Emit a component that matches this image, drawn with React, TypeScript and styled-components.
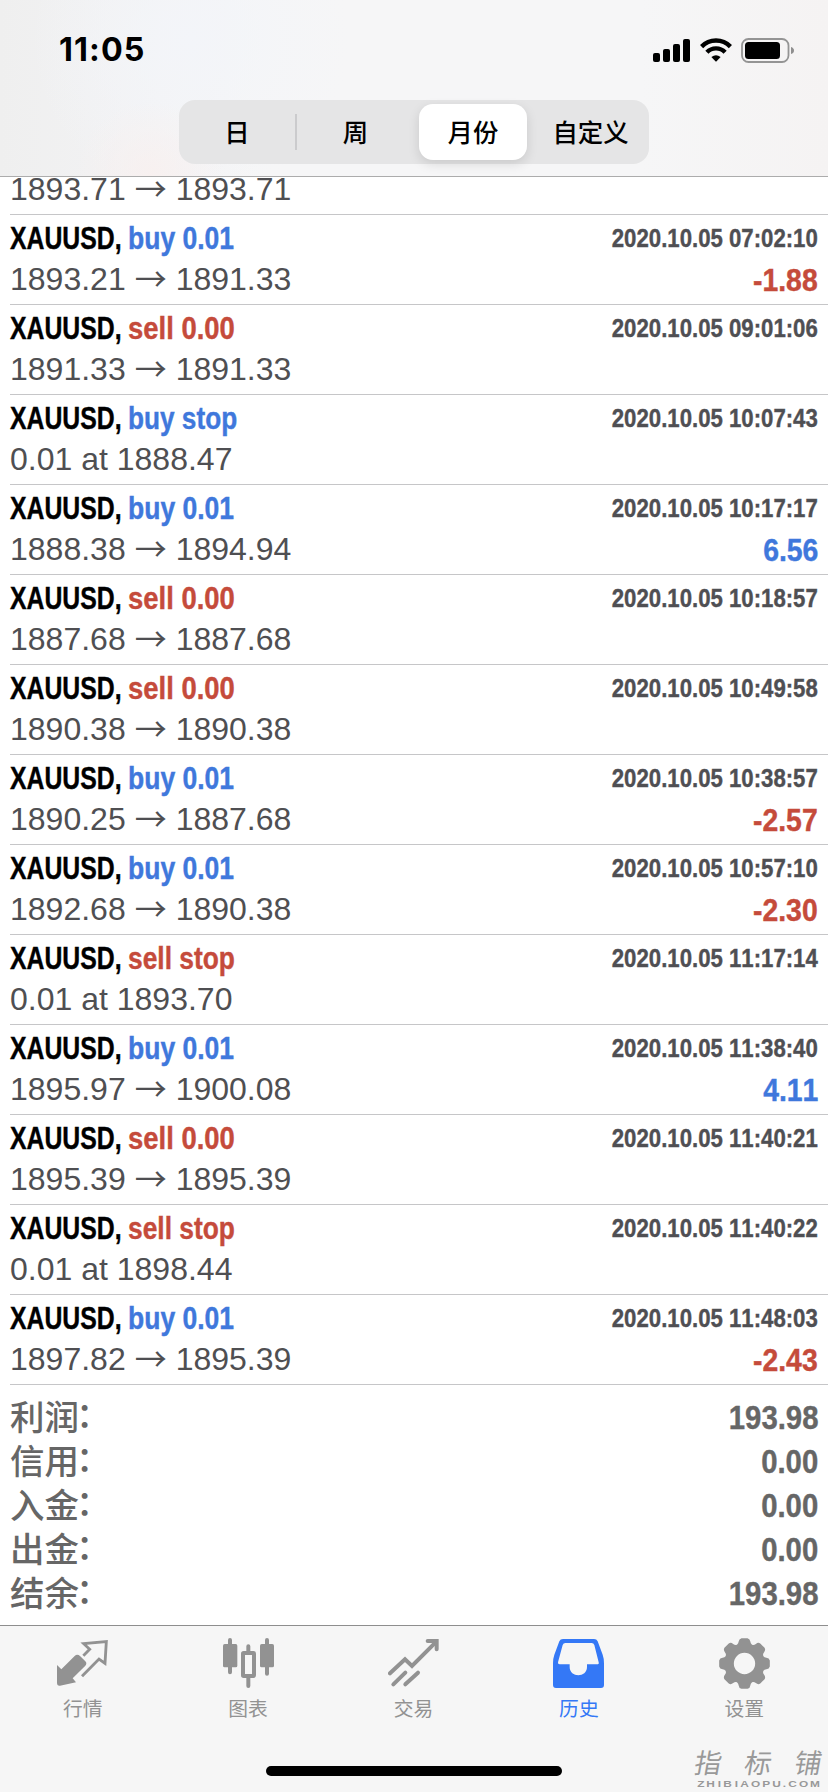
import React from "react";
import styled, { createGlobalStyle } from "styled-components";

const GlobalStyle = createGlobalStyle`
  * { box-sizing: border-box; }
  body { margin: 0; background: #fff; }
`;

const latin = `"Liberation Sans", Arial, "Noto Sans CJK SC", sans-serif`;
const cjk = `"Noto Sans CJK SC", "Liberation Sans", sans-serif`;
const BLUE = "#3f78dc";
const RED = "#c54b3b";

const Screen = styled.div`
  width: 828px;
  height: 1792px;
  display: flex;
  flex-direction: column;
  overflow: hidden;
  background: #fff;
  font-family: ${latin};
`;

const Header = styled.header`
  flex: none;
  height: 177px;
  border-bottom: 1px solid #acacac;
  background:
    radial-gradient(circle at 150px 176px, rgba(248, 240, 239, 0.9), rgba(248, 240, 239, 0) 75px),
    radial-gradient(circle at 190px 40px, #f3f5f9, rgba(243, 245, 249, 0) 160px),
    linear-gradient(90deg, #efefef 0, #f1f1f2 90px, #f6f6f7 260px, #f6f6f7 640px, #f5f3f3 100%);
`;

const StatusBar = styled.div`
  height: 100px;
  padding: 0 33px 0 59px;
  display: flex;
  justify-content: space-between;
  align-items: center;
`;

const Clock = styled.span`
  font: 700 32.3px/32px Inter, sans-serif;
  letter-spacing: 1.1px;
  color: #000;
`;

const StatusIcons = styled.div`
  display: flex;
  align-items: center;
  svg { display: block; }
`;

const Segments = styled.div`
  width: 470px;
  height: 64px;
  margin: 0 auto;
  padding: 4px 0;
  display: grid;
  grid-template-columns: 116px 2px 117px 118px 117px;
  align-items: center;
  border-radius: 16px;
  background: #e5e5e6;
`;

const Segment = styled.div<{ $active?: boolean }>`
  height: 56px;
  margin: ${(p) => (p.$active ? "0 5px" : "0")};
  padding-bottom: 3px;
  display: flex;
  align-items: center;
  justify-content: center;
  border-radius: 14px;
  font: 500 25.4px/36px ${cjk};
  color: #000;
  background: ${(p) => (p.$active ? "#fff" : "transparent")};
  box-shadow: ${(p) => (p.$active ? "0 4px 12px rgba(0,0,0,.12)" : "none")};
`;

const SegmentDivider = styled.div`
  width: 2px;
  height: 36px;
  background: #cbcbcd;
`;

const History = styled.main`
  flex: none;
  height: 1448px;
  overflow: hidden;
`;

const ClippedRow = styled.div`
  height: 38px;
  margin-left: 10px;
  border-bottom: 1px solid #c6c6c8;
  display: flex;
  align-items: flex-end;
  padding-bottom: 6px;
`;

const Row = styled.div`
  height: 90px;
  margin-left: 10px;
  padding: 5px 10px 0 0;
  border-bottom: 1px solid #c6c6c8;
`;

const Line = styled.div<{ $h: number }>`
  height: ${(p) => p.$h}px;
  display: flex;
  align-items: center;
`;

const Slot = styled.div<{ $w?: number }>`
  flex: ${(p) => (p.$w ? `0 0 ${p.$w}px` : "1 1 0")};
  min-width: 0;
`;

const RightSlot = styled.div<{ $lift?: number }>`
  flex: 1 1 0;
  min-width: 0;
  display: flex;
  justify-content: flex-end;
  margin-bottom: ${(p) => p.$lift ?? 0}px;
`;

const Condensed = styled.span<{ $size: number; $scale: number; $color: string; $right?: boolean }>`
  display: block;
  width: max-content;
  white-space: pre;
  font-size: ${(p) => p.$size}px;
  line-height: 38px;
  font-weight: 700;
  font-kerning: ${(p) => (p.$right ? "none" : "auto")};
  -webkit-text-stroke: 0.4px currentColor;
  color: ${(p) => p.$color};
  transform: scaleX(${(p) => p.$scale});
  transform-origin: ${(p) => (p.$right ? "right" : "left")} center;
`;

const Price = styled.div`
  display: flex;
  align-items: center;
  white-space: pre;
  font-size: 32px;
  line-height: 38px;
  color: #4f4f52;
`;

const ArrowGlyph = styled.span`
  width: 32px;
  margin: -4px 9px 0;
  font-family: "Noto Sans CJK SC", sans-serif;
  font-weight: 400;
  line-height: 38px;
`;

const Totals = styled.div`
  padding: 10px 10px 0 10px;
`;

const TotalLabel = styled.span`
  display: flex;
  padding-bottom: 4px;
  font: 500 34.5px/44px ${cjk};
  color: #666;
`;

const Colon = styled.span`
  margin: -3px 0 3px -3px;
`;

const TabBar = styled.nav`
  position: relative;
  flex: 1;
  border-top: 1px solid #8e8e8e;
  background: #f6f6f6;
`;

const Tabs = styled.div`
  width: 827px;
  height: 100px;
  padding-top: 12px;
  display: grid;
  grid-template-columns: repeat(5, 1fr);
`;

const Tab = styled.div<{ $active?: boolean }>`
  display: flex;
  flex-direction: column;
  align-items: center;
  gap: 9px;
  font: 400 19.8px/20px ${cjk};
  color: ${(p) => (p.$active ? "#3478f6" : "#929292")};
  svg { display: block; }
`;

const HomeIndicator = styled.div`
  width: 296px;
  height: 10px;
  margin: 40px auto 0;
  border-radius: 5px;
  background: #000;
`;

const Watermark = styled.div`
  position: absolute;
  right: 6px;
  bottom: 4px;
  width: 127px;
  color: #999;
`;

const WatermarkName = styled.div`
  display: flex;
  justify-content: space-between;
  font: 400 27px/34px ${cjk};
  span { transform: skewX(-10deg); }
`;

const WatermarkUrl = styled.div`
  display: flex;
  justify-content: space-between;
  padding: 0 3px 0 3px;
  font: 700 9.5px/9px ${latin};
  span { transform: scaleX(1.25); }
`;

type Side = "buy" | "sell";
type Deal = { side: Side; what: string; time: string; from?: string; to?: string; at?: string; profit?: string };

const deals: Deal[] = [
  { side: "buy", what: "0.01", time: "07:02:10", from: "1893.21", to: "1891.33", profit: "-1.88" },
  { side: "sell", what: "0.00", time: "09:01:06", from: "1891.33", to: "1891.33" },
  { side: "buy", what: "stop", time: "10:07:43", at: "1888.47" },
  { side: "buy", what: "0.01", time: "10:17:17", from: "1888.38", to: "1894.94", profit: "6.56" },
  { side: "sell", what: "0.00", time: "10:18:57", from: "1887.68", to: "1887.68" },
  { side: "sell", what: "0.00", time: "10:49:58", from: "1890.38", to: "1890.38" },
  { side: "buy", what: "0.01", time: "10:38:57", from: "1890.25", to: "1887.68", profit: "-2.57" },
  { side: "buy", what: "0.01", time: "10:57:10", from: "1892.68", to: "1890.38", profit: "-2.30" },
  { side: "sell", what: "stop", time: "11:17:14", at: "1893.70" },
  { side: "buy", what: "0.01", time: "11:38:40", from: "1895.97", to: "1900.08", profit: "4.11" },
  { side: "sell", what: "0.00", time: "11:40:21", from: "1895.39", to: "1895.39" },
  { side: "sell", what: "stop", time: "11:40:22", at: "1898.44" },
  { side: "buy", what: "0.01", time: "11:48:03", from: "1897.82", to: "1895.39", profit: "-2.43" },
];

const totals = [
  ["利润", "193.98"],
  ["信用", "0.00"],
  ["入金", "0.00"],
  ["出金", "0.00"],
  ["结余", "193.98"],
];

const actionScale: Record<string, number> = {
  "buy 0.01": 0.855,
  "sell 0.00": 0.885,
  "buy stop": 0.845,
  "sell stop": 0.85,
};

const PriceMove = ({ from, to }: { from: string; to: string }) => (
  <Price>
    {from}
    <ArrowGlyph>→</ArrowGlyph>
    {to}
  </Price>
);

const DealRow = ({ deal }: { deal: Deal }) => {
  const action = `${deal.side} ${deal.what}`;
  return (
    <Row>
      <Line $h={38}>
        <Slot $w={118}>
          <Condensed $size={31} $scale={0.8} $color="#000">XAUUSD,</Condensed>
        </Slot>
        <Slot>
          <Condensed $size={31} $scale={actionScale[action]} $color={deal.side === "buy" ? BLUE : RED}>
            {action}
          </Condensed>
        </Slot>
        <RightSlot $lift={2}>
          <Condensed $size={25.5} $scale={0.87} $color="#4f4f53" $right>{`2020.10.05 ${deal.time}`}</Condensed>
        </RightSlot>
      </Line>
      <Line $h={42}>
        {deal.at ? <Price>{`0.01 at ${deal.at}`}</Price> : <PriceMove from={deal.from!} to={deal.to!} />}
        {deal.profit && (
          <RightSlot $lift={-3}>
            <Condensed $size={31} $scale={0.915} $color={deal.profit.startsWith("-") ? RED : BLUE} $right>
              {deal.profit}
            </Condensed>
          </RightSlot>
        )}
      </Line>
    </Row>
  );
};

const QuotesIcon = () => (
  <svg width="51" height="51" viewBox="171 84 153 153" fill="none" stroke="currentColor">
    <path d="M171 165L184 178L224 138Q232 130 240 138L256 154Q262 160 256 167L218 205L228 217L180 227Q171 229 171 220Z" fill="currentColor" stroke="none" />
    <path d="M250 137L269 118L251 101L319 95L315 160L297 147L246 199" strokeWidth="8.5" />
  </svg>
);

const ChartIcon = () => (
  <svg width="51" height="51" viewBox="669 84 153 153" fill="none" stroke="currentColor">
    <path d="M690 90V187M801 90V191M745 109V125M745 200V228" strokeWidth="12" strokeLinecap="round" />
    <rect x="669" y="102" width="43" height="70" rx="5" fill="currentColor" stroke="none" />
    <rect x="780" y="102" width="42" height="70" rx="5" fill="currentColor" stroke="none" />
    <rect x="729" y="129" width="33" height="69" rx="2" strokeWidth="12" />
  </svg>
);

const TradeIcon = () => (
  <svg width="51" height="51" viewBox="1165 84 153 153" fill="none" stroke="currentColor" strokeWidth="12" strokeLinecap="round">
    <path d="M1171 190L1216 148L1237 168L1307 98" />
    <path d="M1284 93H1311V118" />
    <path d="M1181 223L1217 188M1217 223L1255 188" />
  </svg>
);

const HistoryIcon = () => (
  <svg width="51" height="51" viewBox="417 84 153 153">
    <path
      fill="currentColor"
      fillRule="evenodd"
      d="M447 87H540Q548 87 551 94L566 134Q570 145 570 160V225Q570 234 561 234H426Q417 234 417 225V160Q417 145 421 134L436 94Q439 87 447 87ZM454 99Q448 99 446 105L432 157Q431 163 437 163H467V171C467 204 519 204 519 171V163H549Q556 163 554 157L541 105Q539 99 533 99Z"
    />
  </svg>
);

const gearPath = (() => {
  const points: string[] = [];
  for (let i = 0; i < 8; i++) {
    const a = (i * Math.PI) / 4;
    const at = (r: number, t: number) =>
      `${(76.5 + r * Math.sin(a + t)).toFixed(2)} ${(76.5 - r * Math.cos(a + t)).toFixed(2)}`;
    points.push(
      `${i ? "L" : "M"}${at(61, -0.37)}Q${at(62, -0.3)} ${at(68, -0.26)}Q${at(76, -0.22)} ${at(76.5, -0.12)}` +
        `L${at(76.5, 0.12)}Q${at(76, 0.22)} ${at(68, 0.26)}Q${at(62, 0.3)} ${at(61, 0.37)}`
    );
  }
  return `${points.join("")}Z`;
})();

const GearIcon = () => (
  <svg width="51" height="51" viewBox="0 0 153 153">
    <path
      fill="currentColor"
      fillRule="evenodd"
      d={`${gearPath}M76.5 44.5a32 32 0 1 0 0 64a32 32 0 1 0 0 -64Z`}
    />
  </svg>
);

const tabs = [
  { label: "行情", Icon: QuotesIcon },
  { label: "图表", Icon: ChartIcon },
  { label: "交易", Icon: TradeIcon },
  { label: "历史", Icon: HistoryIcon, active: true },
  { label: "设置", Icon: GearIcon },
];

const SystemIcons = () => (
  <StatusIcons>
    <svg width="142" height="25" viewBox="0 0 142 25">
      <rect x="0" y="15" width="7" height="9" rx="2" />
      <rect x="10" y="11" width="7" height="13" rx="2" />
      <rect x="20" y="6" width="7" height="18" rx="2" />
      <rect x="30" y="1" width="7" height="23" rx="2" />
      <g fill="none" stroke="#000" strokeWidth="4.4">
        <path d="M48.6 8.6A20 20 0 0 1 77.4 8.6" />
        <path d="M53.9 14.3A12.6 12.6 0 0 1 72.1 14.3" />
      </g>
      <path d="M58.4 18.9Q63 15.6 67.6 18.9L63.6 23.2Q63 23.8 62.4 23.2Z" />
      <rect x="89" y="1" width="46.5" height="23" rx="6.5" fill="none" stroke="#949494" strokeWidth="1.8" />
      <rect x="92" y="4" width="35" height="17" rx="3.5" />
      <path d="M138 9Q141 10 141 12.5T138 16Z" fill="#8f8f8f" />
    </svg>
  </StatusIcons>
);

export default function App() {
  return (
    <Screen>
      <GlobalStyle />
      <Header>
        <StatusBar>
          <Clock>11:05</Clock>
          <SystemIcons />
        </StatusBar>
        <Segments>
          <Segment>日</Segment>
          <SegmentDivider />
          <Segment>周</Segment>
          <Segment $active>月份</Segment>
          <Segment>自定义</Segment>
        </Segments>
      </Header>
      <History>
        <ClippedRow>
          <PriceMove from="1893.71" to="1893.71" />
        </ClippedRow>
        {deals.map((deal) => (
          <DealRow key={deal.time} deal={deal} />
        ))}
        <Totals>
          {totals.map(([label, value]) => (
            <Line key={label} $h={44}>
              <TotalLabel>
                {label}
                <Colon>：</Colon>
              </TotalLabel>
              <RightSlot $lift={-2}>
                <Condensed $size={33.5} $scale={0.875} $color="#666" $right>{value}</Condensed>
              </RightSlot>
            </Line>
          ))}
        </Totals>
      </History>
      <TabBar>
        <Tabs>
          {tabs.map(({ label, Icon, active }) => (
            <Tab key={label} $active={active}>
              <Icon />
              {label}
            </Tab>
          ))}
        </Tabs>
        <HomeIndicator />
        <Watermark>
          <WatermarkName>
            <span>指</span>
            <span>标</span>
            <span>铺</span>
          </WatermarkName>
          <WatermarkUrl>
            {"ZHIBIAOPU.COM".split("").map((c, i) => (
              <span key={i}>{c}</span>
            ))}
          </WatermarkUrl>
        </Watermark>
      </TabBar>
    </Screen>
  );
}
